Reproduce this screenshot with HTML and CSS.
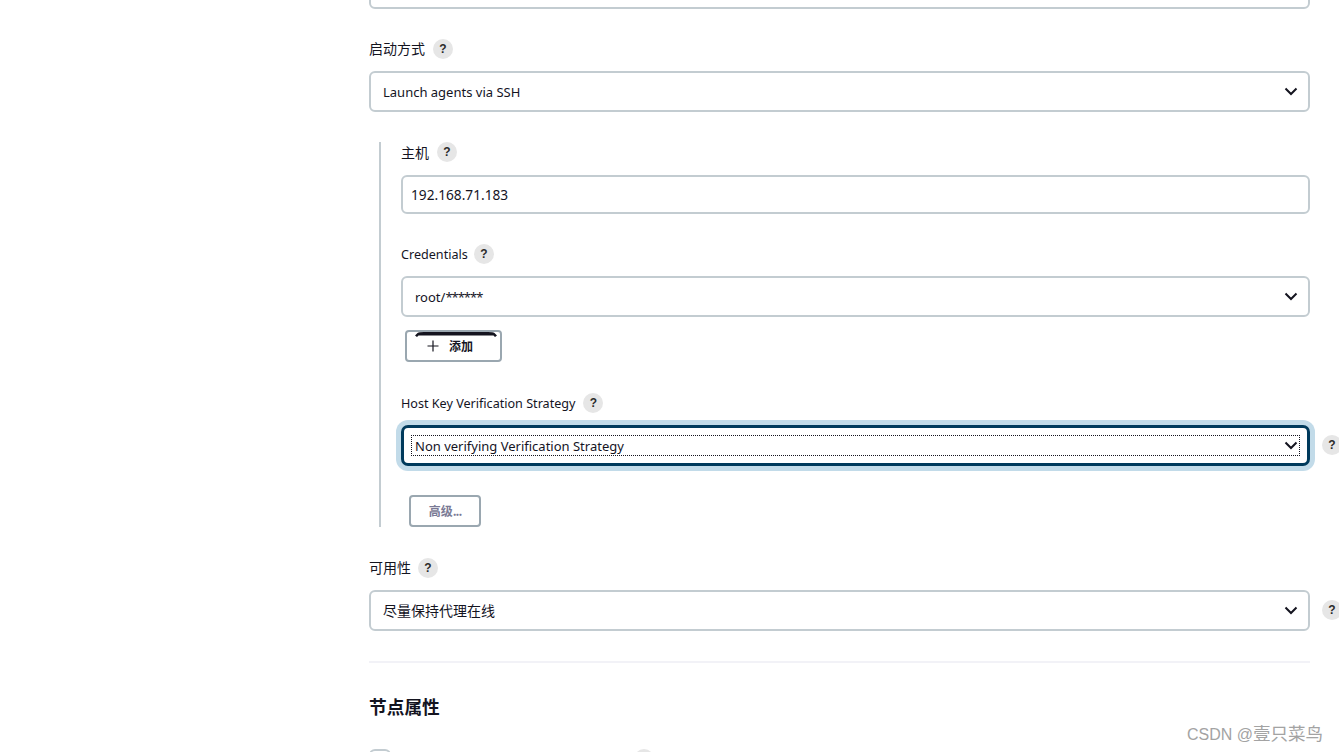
FILE: index.html
```html
<!DOCTYPE html>
<html lang="zh">
<head>
<meta charset="utf-8">
<title>节点配置</title>
<link rel="stylesheet" href="styles.css">
</head>
<body>
<main class="form">
  <div class="stub"></div>

  <div class="label label-launch"><span class="cjk">启动方式</span><span class="help">?</span></div>
  <div class="select select-launch"><span class="value">Launch agents via SSH</span>
    <svg class="chev" viewBox="0 0 14 9"><path d="M1.5 1.5 7 7l5.5-5.5"/></svg></div>

  <section class="nested">
    <div class="label label-host"><span class="cjk nudge">主机</span><span class="help">?</span></div>
    <div class="input">192.168.71.183</div>

    <div class="label label-cred"><span class="latin nudge">Credentials</span><span class="help">?</span></div>
    <div class="select select-cred"><span class="value">root/<span class="stars">******</span></span>
      <svg class="chev" viewBox="0 0 14 9"><path d="M1.5 1.5 7 7l5.5-5.5"/></svg></div>

    <button class="add" type="button">
      <svg class="add-arc" viewBox="0 0 82 5"><path d="M0 3.6 2.5 1Q4 0 9 0H73Q78 0 79.5 1L82 3.6 80 5 78.5 3.4H3.5L2 5Z"/></svg>
      <svg class="plus" viewBox="0 0 12 12"><path d="M6 .5v11M.5 6h11"/></svg>
      <span>添加</span>
    </button>

    <div class="label label-key"><span class="latin nudge">Host Key Verification Strategy</span><span class="help">?</span></div>
    <div class="select select-focus">
      <span class="focus-inner"><span class="value-focus">Non verifying Verification Strategy</span></span>
      <svg class="chev" viewBox="0 0 14 9"><path d="M1.5 1.5 7 7l5.5-5.5"/></svg>
      <span class="help help-out">?</span>
    </div>

    <button class="adv" type="button">高级<span class="dots">...</span></button>
  </section>

  <div class="label label-avail"><span class="cjk">可用性</span><span class="help">?</span></div>
  <div class="select select-avail"><span class="value cjk">尽量保持代理在线</span>
    <svg class="chev" viewBox="0 0 14 9"><path d="M1.5 1.5 7 7l5.5-5.5"/></svg>
    <span class="help help-out">?</span></div>

  <hr class="rule">
  <h2 class="title">节点属性</h2>
  <div class="prop"><span class="check"></span><span class="help help-prop"></span></div>
</main>
<div class="mark">CSDN @<span class="mark-cjk">壹只菜鸟</span></div>
</body>
</html>
```

FILE: styles.css
```css
html, body {
  margin: 0;
  height: 752px;
  overflow: hidden;
  background: #fff;
}
body {
  font-family: "Noto Sans", "Noto Sans CJK SC", sans-serif;
  font-size: 13px;
  color: #14141f;
}
.form {
  width: 941px;
  margin-left: 369px;
}
.cjk { font-size: 14px; }
.latin { font-size: 12.6px; }
.nudge { padding-top: 2px; }
.stub {
  box-sizing: border-box;
  height: 22px;
  margin-top: -13px;
  border: 2px solid #c3ccd1;
  border-radius: 6px;
}
.label {
  display: flex;
  align-items: center;
  height: 20px;
  gap: 8px;
  line-height: 20px;
}
.label-launch { margin-top: 30px; margin-bottom: 12px; }
.label-host { margin-top: 0; margin-bottom: 13px; }
.label-cred { margin-top: 30px; margin-bottom: 12px; gap: 6px; }
.label-key { margin-top: 31px; margin-bottom: 13px; }
.label-avail { margin-top: 31px; margin-bottom: 12px; gap: 7px; }
.help {
  display: flex;
  align-items: center;
  justify-content: center;
  width: 20px;
  height: 20px;
  flex: none;
  border-radius: 50%;
  background: #e6e6e6;
  color: #2b2b2b;
  font-family: "Liberation Sans", sans-serif;
  font-size: 12px;
  font-weight: 700;
}
.select {
  position: relative;
  box-sizing: border-box;
  display: flex;
  align-items: center;
  height: 41px;
  padding-left: 12px;
  border: 2px solid #c3ccd1;
  border-radius: 6px;
  background: #fff;
}
.value { line-height: 20px; }
.stars { letter-spacing: -1px; }
.chev {
  position: absolute;
  right: 10px;
  top: 50%;
  width: 14px;
  height: 9px;
  margin-top: -5px;
  fill: none;
  stroke: #14141f;
  stroke-width: 2;
}
.nested {
  box-sizing: border-box;
  height: 385px;
  margin: 30px 0 31px 10px;
  padding-left: 20px;
  border-left: 2px solid #c3ccd1;
}
.input {
  box-sizing: border-box;
  height: 39px;
  padding-left: 8px;
  border: 2px solid #c3ccd1;
  border-radius: 6px;
  font-size: 13.7px;
  line-height: 35px;
}
.add {
  position: relative;
  display: flex;
  align-items: center;
  box-sizing: border-box;
  width: 97px;
  height: 32px;
  margin: 13px 0 0 4px;
  padding: 0 0 1px 20px;
  border: 2px solid #9aa7b0;
  border-radius: 4px;
  background: #fff;
  color: #14141f;
  font: 700 12px "Noto Sans CJK SC", sans-serif;
}
.add-arc {
  position: absolute;
  left: 8px;
  top: 0;
  width: 82px;
  height: 5px;
  fill: #14141f;
}
.plus {
  width: 12px;
  height: 12px;
  margin-right: 10px;
  fill: none;
  stroke: #14141f;
  stroke-width: 1.2;
}
.select-focus {
  padding-left: 7px;
  margin-top: -1px;
  border: 3px solid #003a5c;
  border-radius: 7px;
  box-shadow: 0 0 0 5px #c2dbe9;
}
.focus-inner {
  display: flex;
  align-items: center;
  box-sizing: border-box;
  width: 889px;
  height: 21px;
  padding-left: 3px;
  border: 1px dotted #14141f;
}
.help-out {
  position: absolute;
  left: calc(100% + 14px);
  top: 8px;
}
.select-focus .help-out { top: 7px; left: calc(100% + 15px); }
.select-focus .chev { right: 9px; }
.adv {
  display: block;
  box-sizing: border-box;
  width: 72px;
  height: 32px;
  margin: 29px 0 0 8px;
  padding: 0 0 1px;
  border: 2px solid #9aa7b0;
  border-radius: 4px;
  background: #fff;
  color: #7a7a95;
  font: 700 12px "Noto Sans CJK SC", sans-serif;
}
.dots { letter-spacing: -1px; }
.rule {
  height: 2px;
  margin: 30px 0 0;
  border: 0;
  background: #f2f2f7;
}
.title {
  margin: 30px 0 0;
  font: 700 17.7px/26px "Noto Sans CJK SC", sans-serif;
  color: #14141f;
}
.prop {
  display: flex;
  align-items: flex-start;
  margin-top: 30px;
}
.check {
  box-sizing: border-box;
  width: 22px;
  height: 22px;
  border: 2px solid #c3ccd1;
  border-radius: 6px;
}
.help-prop { margin-left: 243px; }
.mark {
  position: absolute;
  right: 16px;
  top: 721px;
  color: #a3a3a3;
  font: 16px/24px "Liberation Sans", sans-serif;
}
.mark-cjk {
  font-family: "Noto Sans CJK SC", sans-serif;
  font-size: 17.5px;
}
```
